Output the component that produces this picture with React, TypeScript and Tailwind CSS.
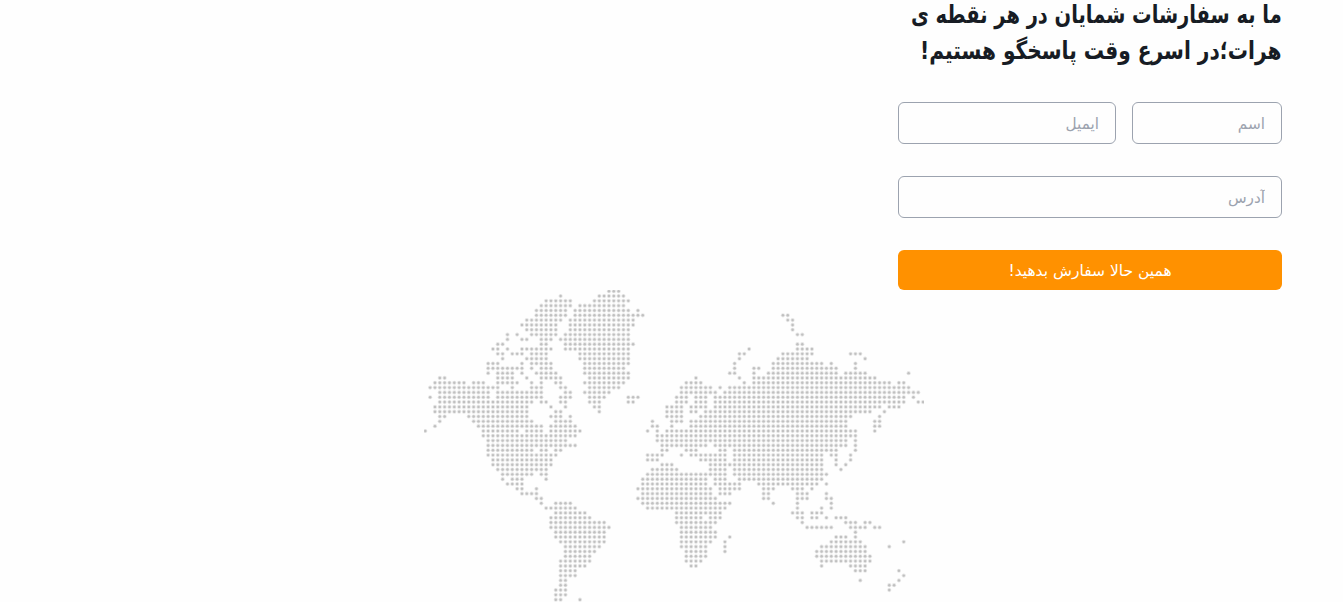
import React from "react";

// Filled column ranges for each row of the dotted world map.
const MAP_ROWS: string[] = [
  "38-40",
  "28 36-41",
  "25-30 35-42",
  "24-30 32-41",
  "23-29 31-42 44",
  "23-29 31-45 74-75",
  "21-28 30-43 75-76",
  "20-27 30-43 76",
  "21-27 30-42 76",
  "17 19 22-27 29-42 77-78",
  "17 20-21 24-26 28-42",
  "15-16 24-25 29-43 77-78",
  "14-15 17 20-26 29-42 67 77-80",
  "15-16 18-20 22-25 32-42 65-66 74-80 88-90",
  "16 21-25 32-42 65 73-79 91",
  "13-15 20 22-26 33-42 64 72-82 84 89",
  "13-20 22 24-26 33-41 64 68-69 72-85 89",
  "13 15-18 20 23-27 33-42 63-64 68 71-85 87-91 100",
  "3-4 15-18 21 24-28 34-42 56 65 68-93",
  "2-8 10-12 15-19 22 24 27-28 33-41 54-57 66 68-96 98-99",
  "1-15 18 22-24 28-29 34-40 53-59 61 63-100",
  "3-13 15-24 29-30 33-38 53-60 62-102",
  "1 3-13 15-24 28-30 34-37 42-44 52-54 56-58 60-99 101",
  "3-22 24-25 28-29 34-36 42-43 52-54 56-58 60-99 102-103",
  "2-21 26 29 35-36 50-53 55-58 60-94 96-98",
  "2-21 27-28 36 50-53 55-56 58-92 95",
  "3-4 9-21 26-28 30 50-53 57-88 94",
  "3 10-22 27-30 47 51-53 55-87 93-94",
  "2 11-24 26-31 47-48 51 55-87 93-94",
  "0 12-19 21-24 26-32 46 48 50-89 93",
  "12-31 48-89",
  "13-29 48-87 89",
  "13-31 49-58 60-87 89",
  "13-22 24-25 27-28 49-50 54-56 61-62 64-85 89",
  "13-27 46-49 53 55-62 64-82 84-85 88",
  "14-26 46-48 57-62 64-82 85 88",
  "14-26 49-51 59-63 64-82 85 87",
  "15-25 47-52 59-62 64-82 86",
  "16-22 24-25 46-62 64-83",
  "16 18-20 25 45-58 60-62 65-82",
  "17-20 45-58 60-65 69-81 83",
  "19-20 23 44-59 61-65 70-72 76-78 80",
  "20-23 45-59 61-63 70-71 77-79 83",
  "23-24 44-60 70-71 77-79 83-84",
  "24 27-30 45-63 72 77 84",
  "25-31 46-62 77 82 84",
  "27-33 52-61 76-78 80-82",
  "26-34 52-57 59-61 77-78 80-81 83 85-87",
  "26-37 52-60 78 87-89 91-92",
  "26-38 53-59 79-84 88-91 93-94",
  "27-37 53-60 89",
  "27-37 53-60 63 85-87 89",
  "28-37 53-59 62 84-90 99",
  "29-36 53-58 62 82-91 96",
  "29-35 54-58 62 81-91",
  "29-34 54-58 81-92",
  "28-34 54-57 82-92",
  "28-33 55-56 82 88-91",
  "28-31 89-91 98",
  "28-31 99",
  "28-29 90 98",
  "28-29 96-97",
  "27-29 96",
  "27-29",
  "27-28 32",
];

const dots = MAP_ROWS.flatMap((row, r) =>
  row.split(" ").flatMap((range) => {
    const [from, to = from] = range.split("-").map(Number);
    return Array.from({ length: to - from + 1 }, (_, i) => ({
      x: 1.3 + (from + i) * 4.833,
      y: 1.2 + r * 4.82,
    }));
  }),
);

function WorldMap() {
  return (
    <svg className="block h-[312px] w-[500px]" viewBox="0 0 500 312" aria-hidden="true">
      {dots.map((d, i) => (
        <g key={i}>
          <circle cx={d.x} cy={d.y} r={2.1} fill="#e6e6e6" />
          <circle cx={d.x} cy={d.y} r={1.2} fill="#c0c0c0" />
        </g>
      ))}
    </svg>
  );
}

const field =
  "h-[42px] min-w-0 rounded-md border border-[#9ca3af] bg-transparent px-4 pt-0.5 text-[15.3px] outline-none placeholder:text-[#9ca3af]";

export default function App() {
  return (
    <main
      dir="rtl"
      className="flex h-[602px] flex-col overflow-hidden bg-[#fefefe] pr-[61px] font-['DejaVu_Sans',sans-serif]"
    >
      <section className="-mt-[3px] w-96 shrink-0">
        <h2 className="mb-[33px] font-['DejaVu_Sans_Condensed','DejaVu_Sans',sans-serif] text-[25px] leading-9 font-bold whitespace-nowrap text-[#171c24] [font-stretch:condensed]">
          <span className="block w-max origin-right scale-x-[0.865]">ما به سفارشات شمایان در هر نقطه ی</span>
          <span className="block w-max origin-right scale-x-[0.896]">هرات؛در اسرع وقت پاسخگو هستیم!</span>
        </h2>
        <form className="flex flex-col gap-8" onSubmit={(e) => e.preventDefault()}>
          <div className="flex gap-4">
            <input className={`${field} w-[150px]`} placeholder="اسم" />
            <input className={`${field} flex-1`} placeholder="ایمیل" />
          </div>
          <input className={field} placeholder="آدرس" />
          <button className="h-10 rounded-md bg-[#ff9100] pt-[3px] text-[15.5px] text-white">
            همین حالا سفارش بدهید!
          </button>
        </form>
      </section>
      <div className="mr-[358px] shrink-0">
        <WorldMap />
      </div>
    </main>
  );
}
